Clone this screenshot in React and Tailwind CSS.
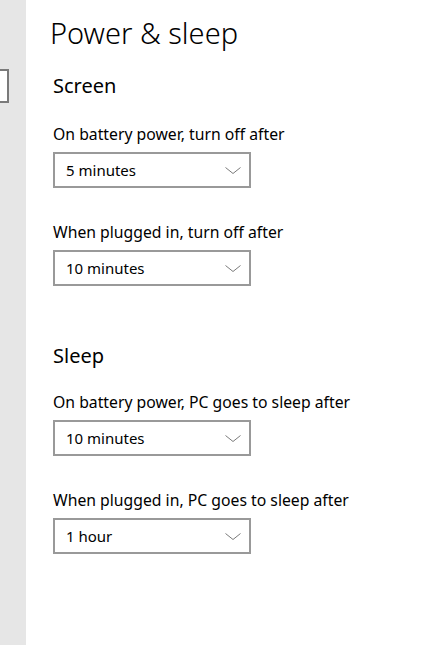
import { useState } from 'react';

// Dropdown stile Windows 10
function Select({ value }) {
  return (
    <div className="w-[198px] h-[36px] border-2 border-[#999999] bg-white flex items-center justify-between pl-[11px] pr-[8px]">
      <span className="text-[15px] text-black leading-none">{value}</span>
      <svg width="16" height="7" viewBox="0 0 16 7" fill="none">
        <path d="M0.5 0.5 L8 6.5 L15.5 0.5" stroke="#7a7a7a" strokeWidth="1" />
      </svg>
    </div>
  );
}

function Setting({ label, value }) {
  return (
    <div className="flex flex-col">
      <p className="text-[15.75px] leading-[20px] text-black mb-[8px]">{label}</p>
      <Select value={value} />
    </div>
  );
}

export default function App() {
  const [settings] = useState({
    screenBattery: '5 minutes',
    screenPlugged: '10 minutes',
    sleepBattery: '10 minutes',
    sleepPlugged: '1 hour',
  });

  return (
    <div
      className="flex w-[424px] h-[645px] bg-white overflow-hidden"
      style={{ fontFamily: '"Noto Sans", "Open Sans", sans-serif' }}
    >
      {/* Barra laterale tagliata */}
      <div className="w-[26px] shrink-0 bg-[#e6e6e6] pt-[69px]">
        <div className="w-[9px] h-[34px] border-2 border-l-0 border-[#7a7a7a] bg-white" />
      </div>

      {/* Contenuto */}
      <div className="flex-1 pl-[24px]">
        <h1 className="text-[29px] font-light leading-[36px] mt-[15px] text-black">Power &amp; sleep</h1>

        <div className="pl-[3px]">
          <h2 className="text-[20px] leading-[28px] mt-[21px] text-black">Screen</h2>
          <div className="flex flex-col gap-[34px] mt-[24px]">
            <Setting label="On battery power, turn off after" value={settings.screenBattery} />
            <Setting label="When plugged in, turn off after" value={settings.screenPlugged} />
          </div>

          <h2 className="text-[20px] leading-[28px] mt-[56px] text-black">Sleep</h2>
          <div className="flex flex-col gap-[34px] mt-[22px]">
            <Setting label="On battery power, PC goes to sleep after" value={settings.sleepBattery} />
            <Setting label="When plugged in, PC goes to sleep after" value={settings.sleepPlugged} />
          </div>
        </div>
      </div>
    </div>
  );
}
